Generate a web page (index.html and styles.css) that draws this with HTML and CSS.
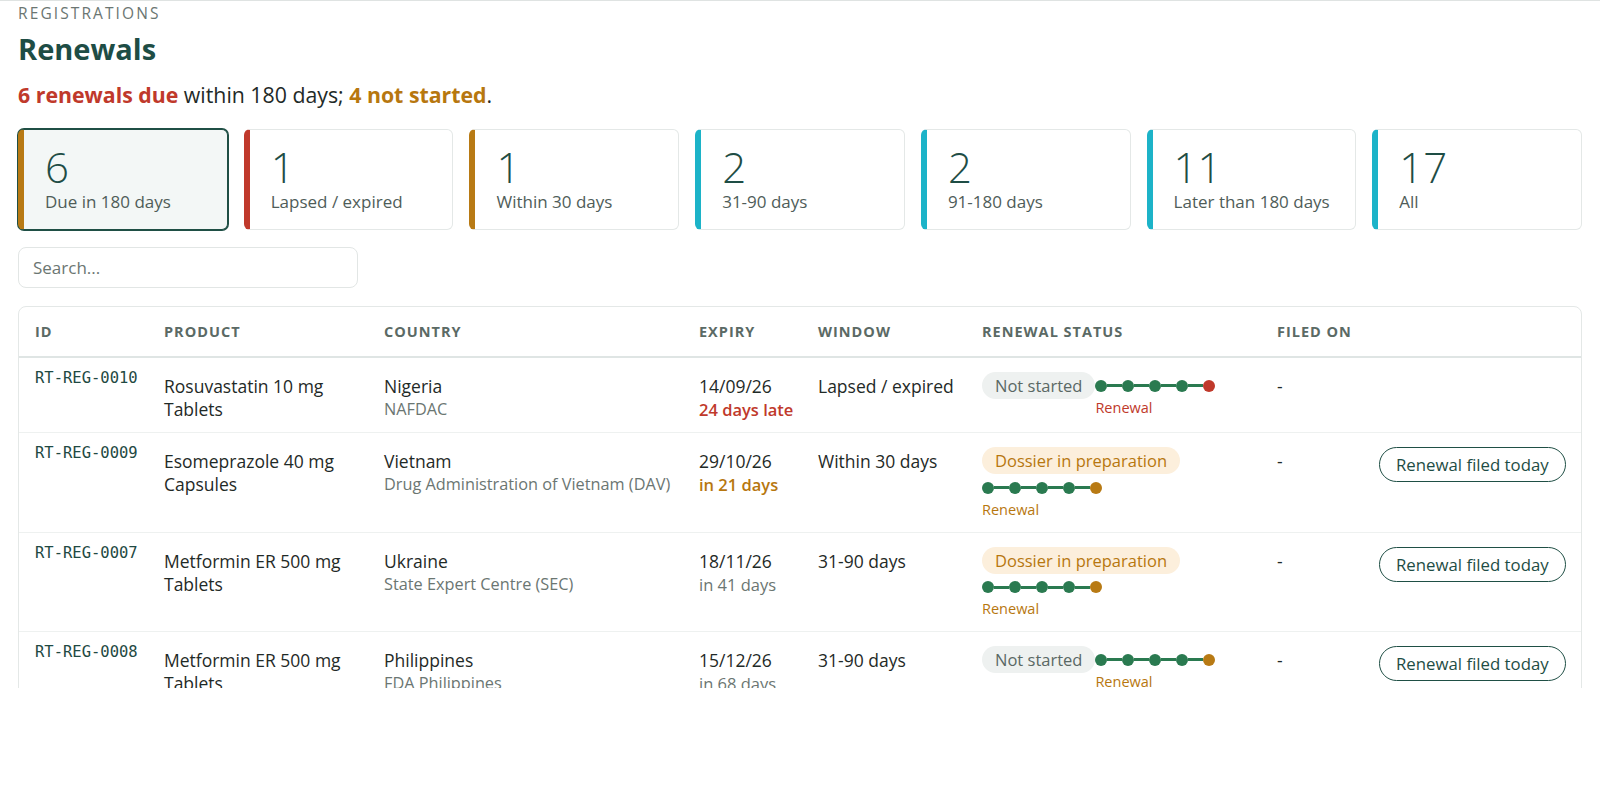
FILE: index.html
```html
<!DOCTYPE html>
<html lang="en">
<head>
    <meta charset="UTF-8">
    <meta name="viewport" content="width=device-width, initial-scale=1.0">
    <title>Registrations - Renewals</title>
    <link rel="stylesheet" href="styles.css">
</head>
<body>
    <div class="page">
        <div class="eyebrow">REGISTRATIONS</div>
        <h1>Renewals</h1>
        <p class="summary"><b class="txt-red">6 renewals due</b> within 180 days; <b class="txt-amber">4 not started</b>.</p>

        <div class="cards">
            <div class="card stripe-amber active">
                <div class="card-num">6</div>
                <div class="card-label">Due in 180 days</div>
            </div>
            <div class="card stripe-red">
                <div class="card-num">1</div>
                <div class="card-label">Lapsed / expired</div>
            </div>
            <div class="card stripe-amber">
                <div class="card-num">1</div>
                <div class="card-label">Within 30 days</div>
            </div>
            <div class="card stripe-cyan">
                <div class="card-num">2</div>
                <div class="card-label">31-90 days</div>
            </div>
            <div class="card stripe-cyan">
                <div class="card-num">2</div>
                <div class="card-label">91-180 days</div>
            </div>
            <div class="card stripe-cyan">
                <div class="card-num">11</div>
                <div class="card-label">Later than 180 days</div>
            </div>
            <div class="card stripe-cyan">
                <div class="card-num">17</div>
                <div class="card-label">All</div>
            </div>
        </div>

        <input type="text" class="search" placeholder="Search...">

        <div class="table-wrap">
            <table>
                <colgroup>
                    <col style="width: 129px">
                    <col style="width: 220px">
                    <col style="width: 315px">
                    <col style="width: 119px">
                    <col style="width: 164px">
                    <col style="width: 295px">
                    <col style="width: 102px">
                    <col style="width: 218px">
                </colgroup>
                <thead>
                    <tr>
                        <th>ID</th>
                        <th>Product</th>
                        <th>Country</th>
                        <th>Expiry</th>
                        <th>Window</th>
                        <th>Renewal status</th>
                        <th>Filed on</th>
                        <th></th>
                    </tr>
                </thead>
                <tbody>
                    <tr>
                        <td class="id-cell"><span class="mono">RT-REG-0010</span></td>
                        <td>Rosuvastatin 10 mg Tablets</td>
                        <td>Nigeria<div class="sub">NAFDAC</div></td>
                        <td class="nowrap">14/09/26<div class="due txt-red">24 days late</div></td>
                        <td class="nowrap">Lapsed / expired</td>
                        <td class="status-cell">
                            <div class="status">
                                <span class="pill pill-grey">Not started</span>
                                <div class="track">
                                    <div class="dots"><i class="dot"></i><i class="bar"></i><i class="dot"></i><i class="bar"></i><i class="dot"></i><i class="bar"></i><i class="dot"></i><i class="bar"></i><i class="dot dot-red"></i></div>
                                    <div class="track-label txt-red">Renewal</div>
                                </div>
                            </div>
                        </td>
                        <td>-</td>
                        <td class="action-cell"></td>
                    </tr>
                    <tr>
                        <td class="id-cell"><span class="mono">RT-REG-0009</span></td>
                        <td>Esomeprazole 40 mg Capsules</td>
                        <td>Vietnam<div class="sub">Drug Administration of Vietnam (DAV)</div></td>
                        <td class="nowrap">29/10/26<div class="due txt-amber">in 21 days</div></td>
                        <td class="nowrap">Within 30 days</td>
                        <td class="status-cell">
                            <div class="status">
                                <span class="pill pill-amber">Dossier in preparation</span>
                                <div class="track">
                                    <div class="dots"><i class="dot"></i><i class="bar"></i><i class="dot"></i><i class="bar"></i><i class="dot"></i><i class="bar"></i><i class="dot"></i><i class="bar"></i><i class="dot dot-amber"></i></div>
                                    <div class="track-label txt-amber">Renewal</div>
                                </div>
                            </div>
                        </td>
                        <td>-</td>
                        <td class="action-cell"><button class="btn-filed">Renewal filed today</button></td>
                    </tr>
                    <tr>
                        <td class="id-cell"><span class="mono">RT-REG-0007</span></td>
                        <td>Metformin ER 500 mg Tablets</td>
                        <td>Ukraine<div class="sub">State Expert Centre (SEC)</div></td>
                        <td class="nowrap">18/11/26<div class="due">in 41 days</div></td>
                        <td class="nowrap">31-90 days</td>
                        <td class="status-cell">
                            <div class="status">
                                <span class="pill pill-amber">Dossier in preparation</span>
                                <div class="track">
                                    <div class="dots"><i class="dot"></i><i class="bar"></i><i class="dot"></i><i class="bar"></i><i class="dot"></i><i class="bar"></i><i class="dot"></i><i class="bar"></i><i class="dot dot-amber"></i></div>
                                    <div class="track-label txt-amber">Renewal</div>
                                </div>
                            </div>
                        </td>
                        <td>-</td>
                        <td class="action-cell"><button class="btn-filed">Renewal filed today</button></td>
                    </tr>
                    <tr>
                        <td class="id-cell"><span class="mono">RT-REG-0008</span></td>
                        <td>Metformin ER 500 mg Tablets</td>
                        <td>Philippines<div class="sub">FDA Philippines</div></td>
                        <td class="nowrap">15/12/26<div class="due">in 68 days</div></td>
                        <td class="nowrap">31-90 days</td>
                        <td class="status-cell">
                            <div class="status">
                                <span class="pill pill-grey">Not started</span>
                                <div class="track">
                                    <div class="dots"><i class="dot"></i><i class="bar"></i><i class="dot"></i><i class="bar"></i><i class="dot"></i><i class="bar"></i><i class="dot"></i><i class="bar"></i><i class="dot dot-amber"></i></div>
                                    <div class="track-label txt-amber">Renewal</div>
                                </div>
                            </div>
                        </td>
                        <td>-</td>
                        <td class="action-cell"><button class="btn-filed">Renewal filed today</button></td>
                    </tr>
                </tbody>
            </table>
        </div>
    </div>
</body>
</html>
```

FILE: styles.css
```css
body {
    margin: 0;
    font-family: "Open Sans", "Noto Sans", sans-serif;
    color: #1f2a27;
    background-color: #ffffff;
}

.page {
    height: 688px;
    overflow: hidden;
    box-sizing: border-box;
    border-top: 1px solid #dfe3e2;
    padding: 2px 18px 0;
}

.eyebrow {
    font-size: 15.5px;
    line-height: 20px;
    letter-spacing: 2.1px;
    color: #6b7672;
}

h1 {
    margin: 8px 0 0;
    font-size: 29px;
    line-height: 35px;
    font-weight: 700;
    color: #1e4d45;
}

.summary {
    margin: 14px 0 0;
    font-size: 21.3px;
    line-height: 29px;
    color: #1f2a27;
}

.txt-red {
    color: #c0392b;
}

.txt-amber {
    color: #b7770f;
}

/* summary cards */
.cards {
    display: flex;
    gap: 16px;
    margin-top: 20px;
}

.card {
    flex: 1;
    box-sizing: border-box;
    border: 1px solid #e4e8e7;
    border-left: 6px solid #1cb3c8;
    border-radius: 6px;
    background: #ffffff;
    padding: 15px 18px 16px 21px;
}

.card.active {
    background: #f3f7f6;
    border-color: #1f4f45;
    box-shadow: 0 0 0 1px #1f4f45;
}

.stripe-amber,
.card.active.stripe-amber {
    border-left-color: #b87a14;
}

.stripe-red {
    border-left-color: #c0392b;
}

.stripe-cyan {
    border-left-color: #1cb3c8;
}

.card-num {
    font-size: 42px;
    line-height: 44px;
    font-weight: 300;
    color: #1e4d45;
}

.card-label {
    margin-top: 2px;
    font-size: 17px;
    line-height: 22px;
    color: #4f5d59;
}

.search {
    display: block;
    margin-top: 17px;
    width: 340px;
    height: 41px;
    box-sizing: border-box;
    border: 1px solid #e2e6e5;
    border-radius: 8px;
    padding: 0 14px;
    font-family: inherit;
    font-size: 17px;
    color: #1f2a27;
    outline: none;
}

.search::placeholder {
    color: #6b7672;
}

/* table */
.table-wrap {
    margin-top: 18px;
    border: 1px solid #e4e8e7;
    border-radius: 8px;
}

table {
    width: 100%;
    table-layout: fixed;
    border-collapse: collapse;
}

th {
    text-align: left;
    white-space: nowrap;
    padding: 14px 16px;
    font-size: 14.5px;
    line-height: 21px;
    font-weight: 700;
    letter-spacing: 1px;
    text-transform: uppercase;
    color: #5b6a65;
    border-bottom: 2px solid #dfe5e4;
}

td {
    vertical-align: top;
    padding: 17px 16px 11px;
    font-size: 17.5px;
    line-height: 23px;
    border-bottom: 1px solid #eef1f0;
}

td.id-cell {
    padding-top: 12px;
}

td.status-cell,
td.action-cell {
    padding-top: 14px;
    padding-bottom: 13px;
}

td.action-cell {
    text-align: right;
}

.nowrap {
    white-space: nowrap;
}

.mono {
    display: block;
    white-space: nowrap;
    font-family: "DejaVu Sans Mono", "Liberation Mono", monospace;
    font-size: 15.5px;
    line-height: 16px;
    color: #1f4a43;
}

.sub {
    font-size: 16.3px;
    line-height: 23px;
    color: #6b7672;
    white-space: nowrap;
}

.due {
    font-size: 16.5px;
    line-height: 23px;
    color: #6b7672;
}

.due.txt-red,
.due.txt-amber {
    font-weight: 600;
}

.due.txt-red {
    color: #c0392b;
}

.due.txt-amber {
    color: #b7770f;
}

/* renewal status */
.status {
    display: flex;
    flex-wrap: wrap;
    align-items: flex-start;
}

.pill {
    display: inline-block;
    height: 27px;
    line-height: 27px;
    padding: 0 13px;
    border-radius: 14px;
    font-size: 16.5px;
    white-space: nowrap;
}

.pill-grey {
    background: #eef1f0;
    color: #5a6864;
}

.pill-amber {
    background: #fcefdc;
    color: #b7770f;
}

.track {
    margin-top: 7.5px;
}

.dots {
    display: flex;
    align-items: center;
    height: 12px;
}

.dot {
    width: 12px;
    height: 12px;
    border-radius: 50%;
    background: #2a7a50;
}

.bar {
    width: 15px;
    height: 3px;
    background: #2a7a50;
}

.dot-red {
    background: #c0392b;
}

.dot-amber {
    background: #b87a14;
}

.track-label {
    margin-top: 6px;
    font-size: 14.5px;
    line-height: 19px;
}

.btn-filed {
    height: 35px;
    padding: 0 16px;
    border: 1px solid #1f4f45;
    border-radius: 18px;
    background: #ffffff;
    color: #1e4d45;
    font-family: inherit;
    font-size: 16.8px;
    font-weight: 500;
    cursor: pointer;
    white-space: nowrap;
}
```
